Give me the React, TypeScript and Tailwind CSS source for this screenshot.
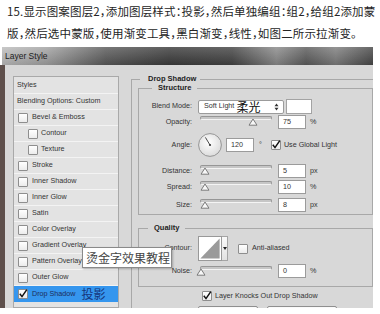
import React from "react";

const ui = "font-['Liberation_Sans',Arial,sans-serif]";
const cjk = "font-['Noto_Sans_CJK_SC',sans-serif]";

function Box({ checked = false }: { checked?: boolean }) {
  return (
    <span className="flex h-[10px] w-[10px] shrink-0 items-center justify-center rounded-[1px] border border-[#8e8e8e] bg-gradient-to-b from-white to-[#ececec]">
      {checked && (
        <svg viewBox="0 0 10 10" className="h-[10px] w-[10px] overflow-visible">
          <path d="M1.8 4.8 L4 7.6 L8.8 0.6" fill="none" stroke="#111" strokeWidth="1.5" />
        </svg>
      )}
    </span>
  );
}

function Label({ children }: { children: React.ReactNode }) {
  return <span className="w-[53px] shrink-0 text-right">{children}</span>;
}

function Slider({ pos }: { pos: number }) {
  return (
    <div className="relative ml-[6px] h-[16px] w-[76px] shrink-0 self-start">
      <div className="absolute left-[2px] right-[2px] top-[2px] h-[4px] rounded-full border border-[#969696] border-b-[#f4f4f4] bg-[#c6c6c6]" />
      <svg viewBox="0 0 10 8" className="absolute top-[4px] h-[8px] w-[10px]" style={{ left: pos - 5 }}>
        <path d="M1 7.2 L5 1 L9 7.2 Z" fill="#f7f7f7" stroke="#7a7a7a" strokeWidth="1" strokeLinejoin="round" />
      </svg>
    </div>
  );
}

function Field({ value }: { value: string }) {
  return (
    <span className="ml-[4px] flex h-[14px] w-[28px] shrink-0 items-center border border-[#9b9b9b] bg-white pl-[4px]">
      {value}
    </span>
  );
}

const list: { label: string; indent?: boolean }[] = [
  { label: "Bevel & Emboss" },
  { label: "Contour", indent: true },
  { label: "Texture", indent: true },
  { label: "Stroke" },
  { label: "Inner Shadow" },
  { label: "Inner Glow" },
  { label: "Satin" },
  { label: "Color Overlay" },
  { label: "Gradient Overlay" },
  { label: "Pattern Overlay" },
  { label: "Outer Glow" },
];

export default function App() {
  return (
    <div className="relative h-[314px] w-[380px] overflow-hidden bg-white">
      <p className={`whitespace-nowrap pl-[7px] text-[11.5px] leading-[22px] tracking-[0.15px] text-[#252525] [font-feature-settings:'halt'] ${cjk}`}>
        15.显示图案图层2，添加图层样式：投影，然后单独编组：组2，给组2添加蒙
        <br />
        版，然后选中蒙版，使用渐变工具，黑白渐变，线性，如图二所示拉渐变。
      </p>

      <div className={`mt-[3px] h-[261px] w-[373px] overflow-hidden text-[7.2px] text-[#333] ${ui}`}>
        {/* title bar */}
        <div className="ml-[2px] flex h-[18px] items-center bg-[linear-gradient(180deg,rgba(255,255,255,0.18),rgba(0,0,0,0.12)),linear-gradient(90deg,#bdbdbd_0%,#a2a2a2_12%,#5a5a5a_28%,#3c3c3c_45%,#444_62%,#8a8a8a_74%,#5c5c5c_82%,#7d7d7d_90%,#474747_100%)] pl-[3px] text-[8.5px] text-[#1c1c1c]">
          Layer Style
        </div>

        <div className="flex h-[243px] border-l-[5px] border-[#5f504c] bg-[#d8d8d8] pl-[8px]">
          {/* left list */}
          <div className="mt-[11px] w-[106px] shrink-0 self-stretch border border-[#a9a9a9] bg-[#e3e3e3]">
            <div className="flex h-[17px] items-center border-b border-[#f3f3f3] pl-[3px]">Styles</div>
            <div className="flex h-[16px] items-center border-b border-[#f3f3f3] pl-[3px]">Blending Options: Custom</div>
            {list.map((it) => (
              <div
                key={it.label}
                className={`flex h-[16px] items-center border-b border-[#f3f3f3] ${it.indent ? "gap-[3px] pl-[14px]" : "gap-[4px] pl-[4px]"}`}
              >
                <Box />
                <span>{it.label}</span>
              </div>
            ))}
            <div className="flex h-[16px] items-center gap-[4px] bg-[#3596ee] pl-[4px] text-[#1d2d5a]">
              <Box checked />
              <span>Drop Shadow</span>
              <span className={`ml-[2px] text-[12px] leading-[14px] text-[#16357a] ${cjk}`}>投影</span>
            </div>
          </div>

          {/* right panel */}
          <fieldset className="ml-[12px] mt-[9px] w-[250px] shrink-0 self-start border border-[#a8a8a8] pl-[6px]">
            <legend className="ml-[2px] pl-[8px] pr-[4px] text-[7.5px] font-bold leading-[10px] text-[#1e1e1e]">Drop Shadow</legend>

            <fieldset className="w-[235px] border border-[#a8a8a8] pb-[1px]">
              <legend className="ml-[13px] px-[6px] text-[7.5px] font-bold leading-[8px] text-[#1e1e1e]">Structure</legend>

              <div className="mt-[7px] flex h-[15px] items-center">
                <Label>Blend Mode:</Label>
                <div className="ml-[6px] flex h-[14px] w-[86px] items-center rounded-[2px] border border-[#9b9b9b] bg-white pl-[5px] pr-[4px]">
                  <span>Soft Light</span>
                  <span className={`ml-[2px] text-[12px] leading-[13px] text-[#111] ${cjk}`}>柔光</span>
                  <svg viewBox="0 0 5 8" className="ml-auto h-[8px] w-[5px]">
                    <path d="M2.5 0.5 L4.5 3.2 H0.5 Z M2.5 7.5 L4.5 4.8 H0.5 Z" fill="#333" />
                  </svg>
                </div>
                <span className="ml-[2px] h-[15px] w-[26px] border border-[#a3a3a3] bg-white" />
              </div>

              <div className="flex h-[16px] items-center">
                <Label>Opacity:</Label>
                <Slider pos={55} />
                <Field value="75" />
                <span className="ml-[4px]">%</span>
              </div>

              <div className="mt-[3px] flex h-[24px] items-center">
                <Label>Angle:</Label>
                <svg viewBox="0 0 24 24" className="ml-[6px] h-[24px] w-[24px] shrink-0">
                  <defs>
                    <radialGradient id="dial" cx="0.45" cy="0.4" r="0.6">
                      <stop offset="0" stopColor="#ffffff" />
                      <stop offset="1" stopColor="#dcdcdc" />
                    </radialGradient>
                  </defs>
                  <circle cx="12" cy="12" r="11.4" fill="url(#dial)" stroke="#8c8c8c" strokeWidth="0.9" />
                  <path d="M12 12 L7.4 4.4" stroke="#333" strokeWidth="0.9" />
                  <circle cx="12" cy="12" r="1.1" fill="#333" />
                </svg>
                <Field value="120" />
                <span className="ml-[5px] self-start pt-[7px]">°</span>
                <span className="ml-[9px]">
                  <Box checked />
                </span>
                <span className="ml-[3px]">Use Global Light</span>
              </div>

              <div className="mt-[6px] flex h-[16px] items-center">
                <Label>Distance:</Label>
                <Slider pos={7} />
                <Field value="5" />
                <span className="ml-[4px]">px</span>
              </div>

              <div className="flex h-[16px] items-center">
                <Label>Spread:</Label>
                <Slider pos={7} />
                <Field value="10" />
                <span className="ml-[4px]">%</span>
              </div>

              <div className="mt-[2px] flex h-[16px] items-center">
                <Label>Size:</Label>
                <Slider pos={7} />
                <Field value="8" />
                <span className="ml-[4px]">px</span>
              </div>
            </fieldset>

            <fieldset className="mt-[9px] w-[235px] border border-[#a8a8a8] pb-[8px]">
              <legend className="ml-[9px] px-[6px] text-[7.5px] font-bold leading-[8px] text-[#1e1e1e]">Quality</legend>

              <div className="mt-[4px] flex h-[25px] items-center">
                <Label>Contour:</Label>
                <div className="ml-[6px] flex h-[25px] shrink-0">
                  <svg viewBox="0 0 24 25" className="h-[25px] w-[24px] border border-[#999] bg-white">
                    <path d="M1.5 23.5 L22.5 1.5 V23.5 Z" fill="#9a9a9a" />
                  </svg>
                  <div className="flex h-[25px] w-[6px] items-center justify-center border border-l-0 border-[#a5a5a5] bg-gradient-to-b from-[#fafafa] to-[#e2e2e2]">
                    <svg viewBox="0 0 4 3" className="h-[3px] w-[4px]">
                      <path d="M0 0 H4 L2 3 Z" fill="#222" />
                    </svg>
                  </div>
                </div>
                <span className="ml-[10px]">
                  <Box />
                </span>
                <span className="ml-[4px]">Anti-aliased</span>
              </div>

              <div className="mt-[3px] flex h-[14px] items-center">
                <Label>Noise:</Label>
                <Slider pos={3} />
                <Field value="0" />
                <span className="ml-[4px]">%</span>
              </div>
            </fieldset>

            <div className="mt-[4px] flex h-[10px] items-center pl-[64px]">
              <Box checked />
              <span className="ml-[3px]">Layer Knocks Out Drop Shadow</span>
            </div>

            <div className="mt-[5px] flex pl-[60px]">
              <span className="h-[16px] w-[60px] rounded-[2px] border border-[#8f8f8f] bg-gradient-to-b from-[#fbfbfb] to-[#e4e4e4]" />
              <span className="ml-[9px] h-[16px] w-[70px] rounded-[2px] border border-[#8f8f8f] bg-gradient-to-b from-[#fbfbfb] to-[#e4e4e4]" />
            </div>
          </fieldset>
        </div>
      </div>

      {/* tooltip */}
      <div className={`absolute left-[82px] top-[247px] flex h-[21px] w-[90px] items-center border border-[#8a8a8a] bg-white pl-[3px] text-[12px] text-[#444] shadow-[1px_1px_2px_rgba(0,0,0,0.25)] ${cjk}`}>
        烫金字效果教程
      </div>
    </div>
  );
}
